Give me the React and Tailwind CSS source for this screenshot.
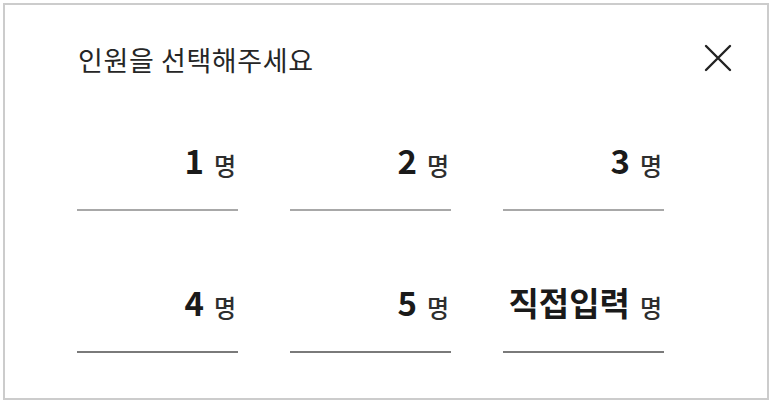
import React from 'react';

// Headcount picker sheet: title, close button, 3x2 grid of options

const OPTIONS = [
  { label: '1', top: true },
  { label: '2', top: true },
  { label: '3', top: true },
  { label: '4', top: false },
  { label: '5', top: false },
  { label: '직접입력', top: false },
];

function CloseIcon() {
  return (
    <svg width="28" height="28" viewBox="0 0 28 28" fill="none">
      <path d="M2 2L26 26M26 2L2 26" stroke="#222" strokeWidth="2.4" strokeLinecap="round" />
    </svg>
  );
}

function Option({ label, top }) {
  return (
    <button
      className={
        'h-[100px] flex items-end justify-end pr-[2px] pb-[32px] border-b-2 bg-white ' +
        (top ? 'border-[#a8a8a8]' : 'border-[#7a7a7a]')
      }
    >
      <span className="text-[33px] leading-[33px] font-bold text-[#1a1a1a]">{label}</span>
      <span className="ml-[10px] text-[24px] leading-[24px] font-medium text-[#2e2e2e]">명</span>
    </button>
  );
}

export default function App() {
  return (
    <div
      className="w-[772px] h-[403px] bg-white p-[3px]"
      style={{ fontFamily: '"Noto Sans CJK KR", "Noto Sans", sans-serif' }}
    >
      <div className="h-full border-2 border-[#cccccc] pt-[42px]">
        <div className="h-[26px] flex justify-between pl-[73px] pr-[35px]">
          <h2 className="text-[27px] leading-[26px] tracking-[0.6px] font-normal text-[#262626]">
            인원을 선택해주세요
          </h2>
          <div className="-mt-[3px]">
            <CloseIcon />
          </div>
        </div>
        <div className="mt-[38px] pl-[72px] grid grid-cols-[161px_161px_161px] gap-x-[52px] gap-y-[42px]">
          {OPTIONS.map((o) => (
            <Option key={o.label} label={o.label} top={o.top} />
          ))}
        </div>
      </div>
    </div>
  );
}
